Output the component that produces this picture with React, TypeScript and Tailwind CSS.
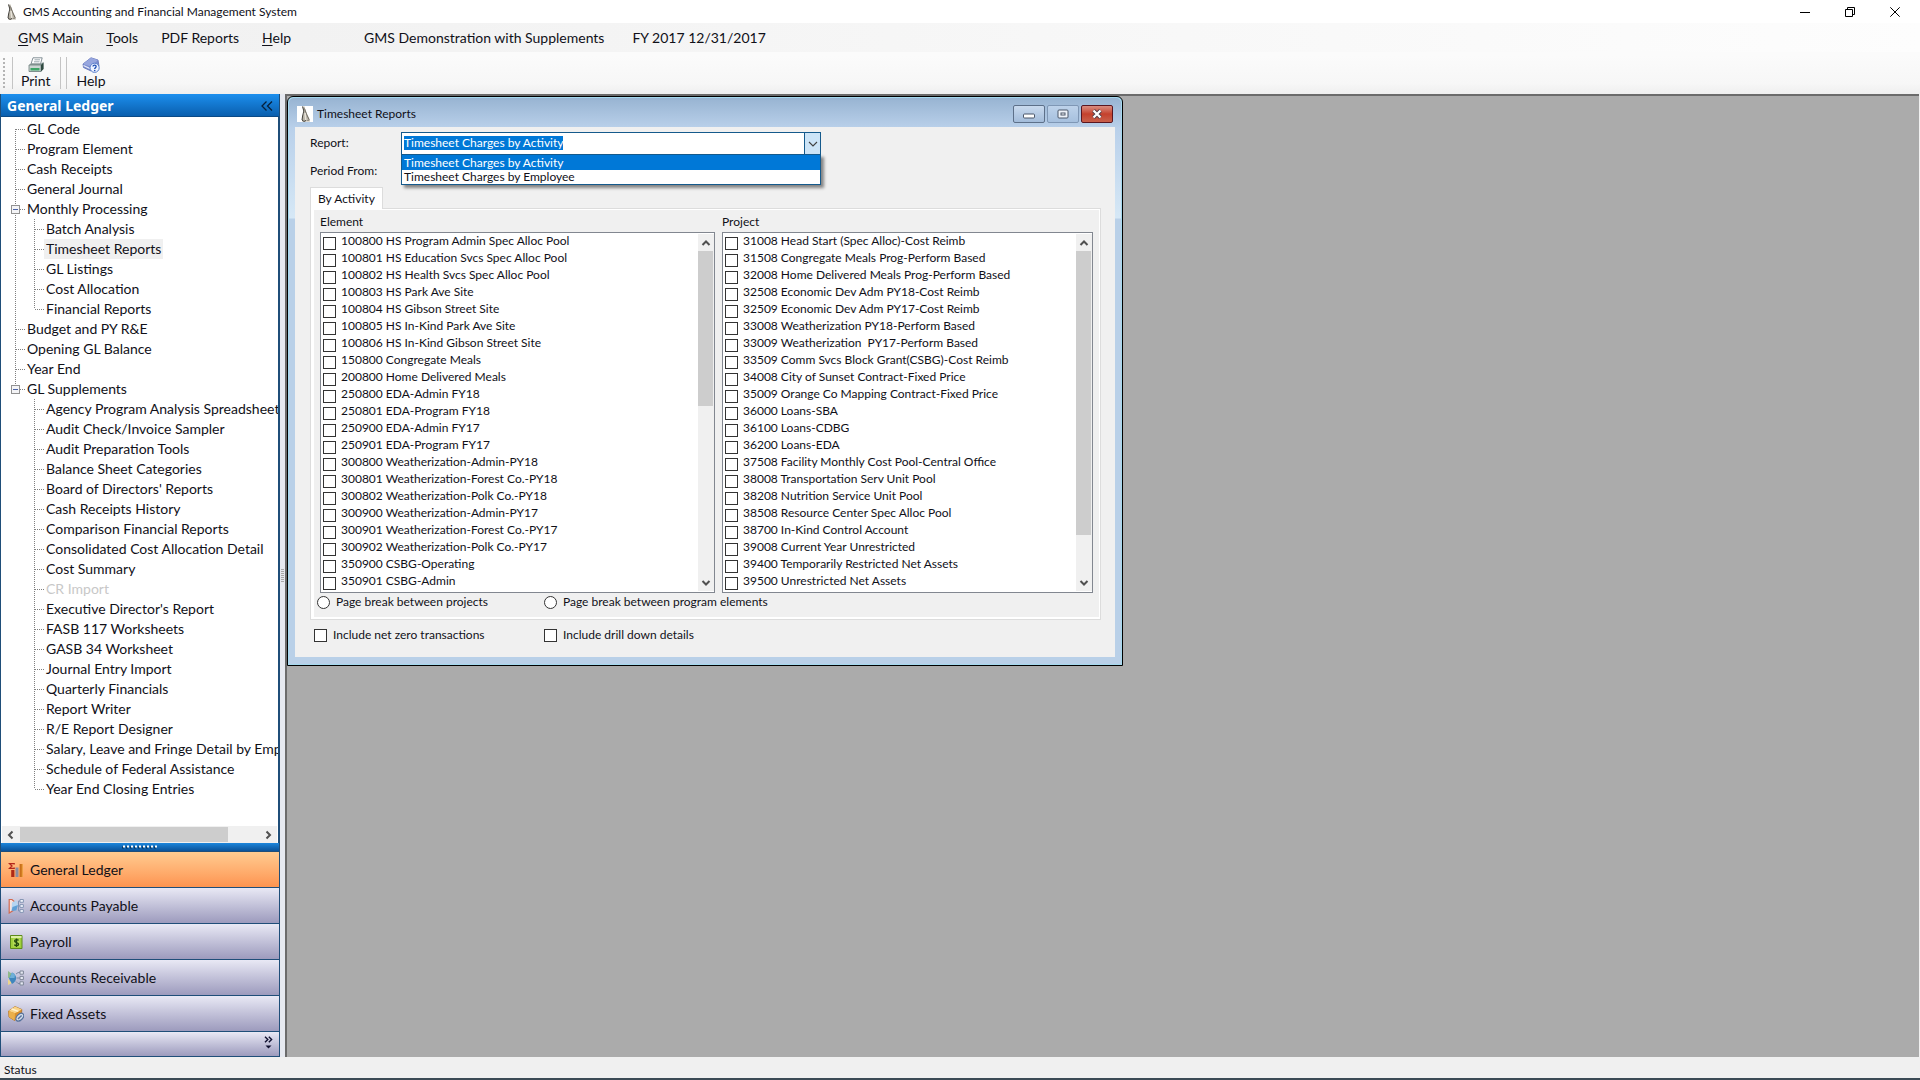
import React from "react";

const monthly = ["Batch Analysis", "Timesheet Reports", "GL Listings", "Cost Allocation", "Financial Reports"];
const supplements = [
  "Agency Program Analysis Spreadsheet",
  "Audit Check/Invoice Sampler",
  "Audit Preparation Tools",
  "Balance Sheet Categories",
  "Board of Directors' Reports",
  "Cash Receipts History",
  "Comparison Financial Reports",
  "Consolidated Cost Allocation Detail",
  "Cost Summary",
  "CR Import",
  "Executive Director's Report",
  "FASB 117 Worksheets",
  "GASB 34 Worksheet",
  "Journal Entry Import",
  "Quarterly Financials",
  "Report Writer",
  "R/E Report Designer",
  "Salary, Leave and Fringe Detail by Employee",
  "Schedule of Federal Assistance",
  "Year End Closing Entries",
];

type Node = { label: string; children?: string[] };
const tree: Node[] = [
  { label: "GL Code" },
  { label: "Program Element" },
  { label: "Cash Receipts" },
  { label: "General Journal" },
  { label: "Monthly Processing", children: monthly },
  { label: "Budget and PY R&E" },
  { label: "Opening GL Balance" },
  { label: "Year End" },
  { label: "GL Supplements", children: supplements },
];

const elements = [
  "100800 HS Program Admin Spec Alloc Pool",
  "100801 HS Education Svcs Spec Alloc Pool",
  "100802 HS Health Svcs Spec Alloc Pool",
  "100803 HS Park Ave Site",
  "100804 HS Gibson Street Site",
  "100805 HS In-Kind Park Ave Site",
  "100806 HS In-Kind Gibson Street Site",
  "150800 Congregate Meals",
  "200800 Home Delivered Meals",
  "250800 EDA-Admin FY18",
  "250801 EDA-Program FY18",
  "250900 EDA-Admin FY17",
  "250901 EDA-Program FY17",
  "300800 Weatherization-Admin-PY18",
  "300801 Weatherization-Forest Co.-PY18",
  "300802 Weatherization-Polk Co.-PY18",
  "300900 Weatherization-Admin-PY17",
  "300901 Weatherization-Forest Co.-PY17",
  "300902 Weatherization-Polk Co.-PY17",
  "350900 CSBG-Operating",
  "350901 CSBG-Admin",
];

const projects = [
  "31008 Head Start (Spec Alloc)-Cost Reimb",
  "31508 Congregate Meals Prog-Perform Based",
  "32008 Home Delivered Meals Prog-Perform Based",
  "32508 Economic Dev Adm PY18-Cost Reimb",
  "32509 Economic Dev Adm PY17-Cost Reimb",
  "33008 Weatherization PY18-Perform Based",
  "33009 Weatherization  PY17-Perform Based",
  "33509 Comm Svcs Block Grant(CSBG)-Cost Reimb",
  "34008 City of Sunset Contract-Fixed Price",
  "35009 Orange Co Mapping Contract-Fixed Price",
  "36000 Loans-SBA",
  "36100 Loans-CDBG",
  "36200 Loans-EDA",
  "37508 Facility Monthly Cost Pool-Central Office",
  "38008 Transportation Serv Unit Pool",
  "38208 Nutrition Service Unit Pool",
  "38508 Resource Center Spec Alloc Pool",
  "38700 In-Kind Control Account",
  "39008 Current Year Unrestricted",
  "39400 Temporarily Restricted Net Assets",
  "39500 Unrestricted Net Assets",
];

/* ---------- icons ---------- */

function AppIcon({ className }: { className: string }) {
  return (
    <svg viewBox="0 0 16 16" className={className} aria-hidden="true">
      <path d="M5.5 0.5 L7.5 0.5 L8.5 4 L10 8 L12.5 13 L13 15.5 L5 15.5 L5 11 L7 7 Z" fill="#b9b4a8" />
      <path d="M5.5 0.5 L6.8 5 L5.6 10 L5 14 L7 15.5 L9 14.5" fill="none" stroke="#45433e" strokeWidth="1" />
      <path d="M7.5 2.5 L9.5 8 L12 13.5 L10.5 15" fill="none" stroke="#6b665d" strokeWidth="0.9" />
      <path d="M8 7 L8.8 14" stroke="#e9e5dc" strokeWidth="1.4" />
    </svg>
  );
}

function PrinterIcon() {
  return (
    <svg viewBox="0 0 16 16" className="h-4 w-4" aria-hidden="true">
      <path d="M5 0.8 L14.2 0.8 L12.5 7 L3 7 Z" fill="#fff" stroke="#66757c" strokeWidth="0.8" />
      <path d="M6.5 2.8 H12 M6 4.8 H11.5" stroke="#7d8f97" strokeWidth="0.8" />
      <path d="M1 8 L3 6.5 H13 L15.5 5 V12 L13 14.5 H1 Z" fill="#8d9c9c" />
      <path d="M1 8 H13 V14.5 H1 Z" fill="#cbd5d2" stroke="#6c7f7c" strokeWidth="0.8" />
      <path d="M13 8 L15.5 5.5 V12 L13 14.5 Z" fill="#2f4a40" />
      <path d="M2.5 11 H11.5 V13.5 H2.5 Z" fill="#3fa568" />
    </svg>
  );
}

function HelpIcon() {
  return (
    <svg viewBox="0 0 18 16" className="h-4 w-[18px]" aria-hidden="true">
      <path d="M1 7 L9 0.8 L16 3 L17 9 L9 14 L1.5 10.5 Z" fill="#7d8fd0" stroke="#5b6cb4" strokeWidth="0.8" />
      <path d="M1 7 L9 0.8 L16 3 L9 9.5 Z" fill="#97a6de" />
      <path d="M1.5 8.5 L9 12 L15 7.5" fill="none" stroke="#e8ecfb" strokeWidth="1.2" />
      <circle cx="12.6" cy="10.8" r="4.6" fill="#eef3ff" stroke="#5c80cc" strokeWidth="1" />
      <path d="M11 9.6 C11 7.6 14.3 7.8 14.1 9.6 C14 10.7 12.7 10.7 12.7 12" fill="none" stroke="#1f4fb4" strokeWidth="1.3" />
      <circle cx="12.7" cy="13.6" r="0.8" fill="#1f4fb4" />
    </svg>
  );
}

function LedgerIcon() {
  return (
    <svg viewBox="0 0 16 16" className="h-4 w-4" aria-hidden="true">
      <path d="M6.2 2.6 V1.6 H1.5 L4 4 L1.5 6.4 H6.2 V5.4" fill="none" stroke="#b3261c" strokeWidth="1.3" />
      <path d="M3.2 8 H6.4 V15 H3.2 Z" fill="#b02a16" />
      <path d="M7.5 5.5 H10.5 V15 H7.5 Z" fill="#8b8da0" />
      <path d="M11.6 2 H14.8 V15 H11.6 Z" fill="#c9701a" />
      <path d="M13.8 2 H14.8 V15 H13.8 Z" fill="#f0a848" />
    </svg>
  );
}

function PayableIcon() {
  return (
    <svg viewBox="0 0 16 16" className="h-4 w-4" aria-hidden="true">
      <path d="M1.2 1.5 H4 L8.5 5.5 L9.5 8 L6 12 L1.2 15 Z" fill="#f6e3df" stroke="#d2694f" strokeWidth="1.2" />
      <path d="M4 4.5 L8 2.5 L10.4 7 L8 12.5 L3.5 12 Z" fill="#b5d5f2" />
      <path d="M4.5 9 L10 7 L8.4 12.5 L3.5 13 Z" fill="#5f9fd6" />
      <path d="M10.5 3 V13 M10.5 3 H12 M10.5 8 H12 M10.5 13 H12" stroke="#7f93b6" fill="none" />
      <path d="M12 1.5 H15.4 V4.3 H12 Z M12 6.6 H15.4 V9.4 H12 Z M12 11.6 H15.4 V14.4 H12 Z" fill="#eef2fa" stroke="#8696b4" strokeWidth="1" />
    </svg>
  );
}

function PayrollIcon() {
  return (
    <svg viewBox="0 0 16 16" className="h-4 w-4" aria-hidden="true">
      <path d="M2.5 1.5 H14 V14.5 H2.5 Z" fill="#9fd03c" stroke="#5c8a1c" />
      <path d="M3 2 H13.5 V4 H3 Z" fill="#dcefa4" />
      <path d="M5 4.5 H12 V12.5 H5 Z" fill="#b4dc58" />
      <path d="M10.6 6.4 C9.6 5.2 6.6 5.4 6.6 7 C6.6 9 10.6 8.1 10.6 10.2 C10.6 12 7.2 12 6.3 10.6 M8.5 4.4 V13" fill="none" stroke="#234b0e" strokeWidth="1.4" />
    </svg>
  );
}

function ReceivableIcon() {
  return (
    <svg viewBox="0 0 16 16" className="h-4 w-4" aria-hidden="true">
      <path d="M0 1 L4 4 L2 8 L0 8 Z" fill="#8fb98a" />
      <path d="M0 15 L0 9 L4 13 Z" fill="#ecd58c" />
      <path d="M4 2.5 C9.5 5 9.5 11 4 14 L1 8.5 Z" fill="#3f86bd" />
      <path d="M4 2.5 L7 4.5 L6.5 8 L1.5 8 Z" fill="#6fb0d8" />
      <path d="M8 4 L10 2.6 H12 M8.5 8 H12 M8 11.5 L10 13.5 H12" stroke="#7c8aa4" fill="none" />
      <path d="M12 1 H15.4 V4.2 H12 Z M12 6.4 H15.4 V9.6 H12 Z M12 11.8 H15.4 V15 H12 Z" fill="#e6e9f2" stroke="#7f8798" />
    </svg>
  );
}

function AssetsIcon() {
  return (
    <svg viewBox="0 0 16 16" className="h-4 w-4" aria-hidden="true">
      <path d="M0.6 5 L7 0.6 L13.8 3.5 L13.4 10 L6.5 14.4 L1 11 Z" fill="#d98f2c" stroke="#a9691a" strokeWidth="0.8" />
      <path d="M0.6 5 L7 0.6 L13.8 3.5 L7 7.2 Z" fill="#f9d489" />
      <path d="M0.6 5 L7 7.2 L6.5 14.4 L1 11 Z" fill="#eab04c" />
      <path d="M3.6 3 L10.3 5.4" stroke="#fff3d0" strokeWidth="1.4" />
      <ellipse cx="11.8" cy="11.2" rx="4.6" ry="2.9" transform="rotate(-45 11.8 11.2)" fill="#d3ddea" stroke="#55719b" strokeWidth="1.2" />
      <path d="M10 13 L13.6 9.4" stroke="#55719b" strokeWidth="1.4" />
    </svg>
  );
}

function Chevron({ dir }: { dir: "up" | "down" | "left" | "right" }) {
  const d = {
    up: "M1.5 7 L5 3.5 L8.5 7",
    down: "M1.5 3 L5 6.5 L8.5 3",
    left: "M6.5 1.5 L3 5 L6.5 8.5",
    right: "M3.5 1.5 L7 5 L3.5 8.5",
  }[dir];
  return (
    <svg viewBox="0 0 10 10" className="h-[10px] w-[10px]" aria-hidden="true">
      <path d={d} fill="none" stroke="#505050" strokeWidth="2" />
    </svg>
  );
}

/* ---------- navigation tree ---------- */

function RootGuide({ first, last, open }: { first: boolean; last: boolean; open: boolean }) {
  return (
    <svg viewBox="0 0 24 20" className="h-5 w-6 shrink-0" shapeRendering="crispEdges" aria-hidden="true">
      <path d={`M14.5 ${first ? 10 : 0} V${last ? 10 : 20}`} stroke="#808080" strokeDasharray="1 1" />
      <path d="M15 10.5 H24" stroke="#808080" strokeDasharray="1 1" />
      {open && (
        <>
          <rect x="10.5" y="6.5" width="8" height="8" fill="#f4f4f6" stroke="#919191" />
          <path d="M12 10.5 H17" stroke="#4b63a7" />
        </>
      )}
    </svg>
  );
}

function ChildGuide({ last, rail }: { last: boolean; rail: boolean }) {
  return (
    <svg viewBox="0 0 43 20" className="h-5 w-[43px] shrink-0" shapeRendering="crispEdges" aria-hidden="true">
      {rail && <path d="M14.5 0 V20" stroke="#808080" strokeDasharray="1 1" />}
      <path d={`M33.5 0 V${last ? 10 : 20}`} stroke="#808080" strokeDasharray="1 1" />
      <path d="M34 10.5 H43" stroke="#808080" strokeDasharray="1 1" />
    </svg>
  );
}

function TreeLabel({ label }: { label: string }) {
  if (label === "Timesheet Reports") {
    return <button className="h-5 bg-[#f0f0f0] px-[2px] whitespace-nowrap">{label}</button>;
  }
  if (label === "CR Import") {
    return <button disabled className="h-5 px-[2px] whitespace-nowrap text-[#c8c8c8]">{label}</button>;
  }
  return <button className="h-5 px-[2px] whitespace-nowrap">{label}</button>;
}

function Tree() {
  return (
    <ul className="flex-1 overflow-hidden pt-[2px] text-sm leading-5">
      {tree.map((n, i) => {
        const last = i === tree.length - 1;
        return (
          <li key={n.label}>
            <div className="flex">
              <RootGuide first={i === 0} last={last} open={!!n.children} />
              <TreeLabel label={n.label} />
            </div>
            {n.children && (
              <ul>
                {n.children.map((c, j) => (
                  <li key={c} className="flex">
                    <ChildGuide rail={!last} last={j === n.children!.length - 1} />
                    <TreeLabel label={c} />
                  </li>
                ))}
              </ul>
            )}
          </li>
        );
      })}
    </ul>
  );
}

const modules = [
  { label: "Accounts Payable", icon: <PayableIcon /> },
  { label: "Payroll", icon: <PayrollIcon /> },
  { label: "Accounts Receivable", icon: <ReceivableIcon /> },
  { label: "Fixed Assets", icon: <AssetsIcon /> },
];

function Sidebar() {
  return (
    <aside className="flex w-[280px] shrink-0 flex-col border-x border-b border-[#1f4e79] bg-white">
      <div className="flex h-[23px] items-center justify-between border-b border-[#0b4a86] bg-linear-to-b from-[#1c8fee] to-[#0a5fae] pt-px pr-[6px] pl-[6px]">
        <h2 className="font-['Noto_Sans'] text-sm leading-5 font-bold text-white">General Ledger</h2>
        <button aria-label="Collapse panel">
          <svg viewBox="0 0 12 10" className="h-[10px] w-3" aria-hidden="true">
            <path d="M5.5 0.5 L1 5 L5.5 9.5 M11 0.5 L6.5 5 L11 9.5" fill="none" stroke="#06203c" strokeWidth="1.3" />
          </svg>
        </button>
      </div>
      <div className="flex min-h-0 flex-1 flex-col border-r border-[#1f4e79]">
        <Tree />
        <div className="mx-px flex h-[17px] items-center bg-[#f0f0f0]">
          <button aria-label="Scroll left" className="flex h-full w-[18px] items-center justify-center">
            <Chevron dir="left" />
          </button>
          <div className="flex h-[15px] flex-1">
            <div className="h-full w-[87%] bg-[#cdcdcd]" />
          </div>
          <button aria-label="Scroll right" className="flex h-full w-[18px] items-center justify-center">
            <Chevron dir="right" />
          </button>
        </div>
      </div>
      <div className="flex h-2 items-center justify-center bg-linear-to-b from-[#1c86dc] to-[#0a5298]">
        <svg viewBox="0 0 36 4" className="h-1 w-9" aria-hidden="true">
          <path d="M0 2.5 H36" stroke="#06365f" strokeWidth="2" strokeDasharray="2 2" />
          <path d="M1 1.5 H36" stroke="#ffffff" strokeWidth="2" strokeDasharray="2 2" />
        </svg>
      </div>
      <nav className="text-sm">
        <button className="flex h-9 w-full items-center gap-[6px] border-t border-[#1f4e79] bg-linear-to-b from-[#ffcb90] to-[#fd9450] pl-[7px]">
          <LedgerIcon />
          General Ledger
        </button>
        {modules.map((m) => (
          <button
            key={m.label}
            className="flex h-9 w-full items-center gap-[6px] border-t border-[#1f4e79] bg-linear-to-b from-[#e9e9f5] to-[#9d9bbd] pl-[7px]"
          >
            {m.icon}
            {m.label}
          </button>
        ))}
        <div className="flex h-[25px] items-start justify-end border-t border-[#1f4e79] bg-linear-to-b from-[#e9e9f5] to-[#9d9bbd] pt-1 pr-[6px]">
          <button aria-label="Configure buttons">
            <svg viewBox="0 0 9 13" className="h-[13px] w-[9px]" aria-hidden="true">
              <path d="M1 0.8 L3.8 3.5 L1 6.2 M4.8 0.8 L7.6 3.5 L4.8 6.2" fill="none" stroke="#101030" strokeWidth="1.4" />
              <path d="M1.5 9.5 H7.5 L4.5 12.5 Z" fill="#101030" />
            </svg>
          </button>
        </div>
      </nav>
    </aside>
  );
}

/* ---------- timesheet window ---------- */

function CheckList({ title, items, wide }: { title: string; items: string[]; wide: boolean }) {
  return (
    <fieldset className={wide ? "min-w-0 flex-[395]" : "min-w-0 flex-[371]"}>
      <legend className="block h-[17px] leading-[14px]">{title}</legend>
      <div className="flex border border-[#828790] bg-white">
        <ul className="min-w-0 flex-1 py-px pl-[2px]">
          {items.map((t) => (
            <li key={t} className="h-[17px]">
              <label className="flex items-start gap-[5px] leading-[14px] whitespace-pre">
                <input type="checkbox" className="mt-[3px] h-[13px] w-[13px] shrink-0 appearance-none border border-[#333] bg-white checked:bg-[#333]" />
                {t}
              </label>
            </li>
          ))}
        </ul>
        <div className="m-px mr-0 flex w-4 flex-col bg-[#f0f0f0]">
          <button aria-label="Scroll up" className="flex h-[17px] items-center justify-center">
            <Chevron dir="up" />
          </button>
          <div className="flex-1">
            <div className={wide ? "h-[48%] w-[15px] bg-[#cdcdcd]" : "h-[88%] w-[15px] bg-[#cdcdcd]"} />
          </div>
          <button aria-label="Scroll down" className="flex h-[17px] items-center justify-center">
            <Chevron dir="down" />
          </button>
        </div>
      </div>
    </fieldset>
  );
}

function ReportPicker() {
  return (
    <div className="relative w-[420px]">
      <div className="flex h-[23px] border border-[#155a8c] bg-white">
        <div className="flex-1 px-[2px] pt-[2px]">
          <select
            id="report"
            className="field-sizing-content h-[14px] appearance-none bg-[#0078d7] leading-[14px] text-white"
            defaultValue="activity"
          >
            <option value="activity">Timesheet Charges by Activity</option>
          </select>
        </div>
        <button aria-label="Open report list" className="flex w-4 items-center justify-center border-l border-[#155a8c] bg-[#cce4f7]">
          <svg viewBox="0 0 10 6" className="h-[6px] w-[10px]" aria-hidden="true">
            <path d="M1 1 L5 5 L9 1" fill="none" stroke="#404040" strokeWidth="1.1" />
          </svg>
        </button>
      </div>
      <ul role="listbox" aria-label="Report" className="absolute inset-x-0 top-[22px] border border-[#155a8c] bg-white leading-[14px] shadow-[3px_3px_3px_rgba(0,0,0,0.45)]">
        <li role="option" aria-selected="true" className="bg-[#0078d7] px-[2px] pt-px text-white">
          Timesheet Charges by Activity
        </li>
        <li role="option" aria-selected="false" className="px-[2px]">
          Timesheet Charges by Employee
        </li>
      </ul>
    </div>
  );
}

function Option({ type, label }: { type: "radio" | "checkbox"; label: string }) {
  return (
    <label className="flex items-center">
      {type === "radio" ? (
        <input type="radio" name="page-break" className="mr-[6px] h-[13px] w-[13px] appearance-none rounded-full border border-[#333] bg-white" />
      ) : (
        <input type="checkbox" className="mr-[6px] h-[13px] w-[13px] appearance-none border border-[#333] bg-white" />
      )}
      {label}
    </label>
  );
}

function TimesheetWindow() {
  return (
    <section className="w-[836px] max-w-full rounded-t-md border border-black bg-[#a5d9ee] p-px text-xs">
      <div className="rounded-t-[5px] bg-[linear-gradient(to_bottom,#98b4d2,#b9d0ea_30px,#d6e8f6_120px,#b9d0e8_121px)] px-[6px] pb-[7px]">
        <header className="flex h-[29px] items-center pt-[3px] pl-[2px]">
          <AppIcon className="h-4 w-4 bg-white" />
          <h1 className="flex-1 pl-1 text-xs">Timesheet Reports</h1>
          <div className="mr-[2px] flex gap-[2px]">
            <button aria-label="Minimize" className="flex h-[18px] w-8 items-center justify-center rounded-xs border border-[#5d7089] bg-linear-to-b from-[#c9daee] to-[#a3bcda]">
              <svg viewBox="0 0 12 6" className="mt-[3px] h-[6px] w-3" aria-hidden="true">
                <rect x="0.5" y="1" width="11" height="4" rx="1" fill="#fff" stroke="#4a5668" />
              </svg>
            </button>
            <button aria-label="Restore" className="flex h-[18px] w-8 items-center justify-center rounded-xs border border-[#7f97b5] bg-linear-to-b from-[#bdd2ea] to-[#a6c0de]">
              <svg viewBox="0 0 12 10" className="h-[10px] w-3" aria-hidden="true">
                <rect x="1" y="1" width="10" height="8" rx="1" fill="#eef3f9" stroke="#4a5668" />
                <rect x="4" y="4" width="4" height="2" fill="#fff" stroke="#4a5668" />
              </svg>
            </button>
            <button aria-label="Close" className="flex h-[18px] w-8 items-center justify-center rounded-xs border border-[#5a1620] bg-linear-to-b from-[#d98c80] via-[#c4402c] via-50% to-[#c8604c]">
              <svg viewBox="0 0 12 10" className="h-[10px] w-3" aria-hidden="true">
                <path d="M2.5 1.5 L9.5 8.5 M9.5 1.5 L2.5 8.5" stroke="#53404a" strokeWidth="4" />
                <path d="M2.5 1.5 L9.5 8.5 M9.5 1.5 L2.5 8.5" stroke="#fff" strokeWidth="2.2" />
              </svg>
            </button>
          </div>
        </header>
        <div className="bg-[#f0f0f0] pt-[5px] pr-[14px] pb-[13px] pl-[15px]">
          <div className="flex">
            <label htmlFor="report" className="w-[91px] pt-[2px] leading-[18px]">
              Report:
            </label>
            <ReportPicker />
          </div>
          <p className="mt-[7px] leading-[18px]">Period From:</p>
          <div role="tablist" className="mt-[7px] flex">
            <button role="tab" aria-selected="true" className="-mb-px h-[22px] border border-b-0 border-[#dcdcdc] bg-white px-[7px]">
              By Activity
            </button>
          </div>
          <div role="tabpanel" className="border border-[#dcdcdc] bg-white p-px pl-[3px] pb-[2px]">
            <div className="bg-[#f0f0f0] px-[6px] pt-[5px] pb-[6px]">
              <div className="flex gap-[7px]">
                <CheckList title="Element" items={elements} wide />
                <CheckList title="Project" items={projects} wide={false} />
              </div>
              <div className="-ml-[3px] grid h-[18px] grid-cols-[227px_1fr] items-center">
                <Option type="radio" label="Page break between projects" />
                <Option type="radio" label="Page break between program elements" />
              </div>
            </div>
          </div>
          <div className="mt-[6px] grid h-[18px] grid-cols-[230px_1fr] items-center pl-1">
            <Option type="checkbox" label="Include net zero transactions" />
            <Option type="checkbox" label="Include drill down details" />
          </div>
        </div>
      </div>
    </section>
  );
}

/* ---------- shell ---------- */

export default function App() {
  return (
    <div className="flex min-h-screen flex-col bg-[#f0f0f0] font-[Lato,sans-serif] text-[#101018]">
      <header className="flex h-[23px] items-center bg-white">
        <AppIcon className="ml-[3px] h-4 w-4" />
        <span className="flex-1 pl-1 text-xs">GMS Accounting and Financial Management System</span>
        <div className="flex gap-[35px] pr-[20px]">
          <button aria-label="Minimize">
            <svg viewBox="0 0 10 10" className="h-[10px] w-[10px]" aria-hidden="true">
              <path d="M0 5.5 H10" stroke="#000" />
            </svg>
          </button>
          <button aria-label="Restore">
            <svg viewBox="0 0 10 10" className="h-[10px] w-[10px]" aria-hidden="true">
              <path d="M0.5 2.5 H7.5 V9.5 H0.5 Z M2.5 2.5 V0.5 H9.5 V7.5 H7.5" fill="none" stroke="#000" />
            </svg>
          </button>
          <button aria-label="Close">
            <svg viewBox="0 0 10 10" className="h-[10px] w-[10px]" aria-hidden="true">
              <path d="M0.3 0.3 L9.7 9.7 M9.7 0.3 L0.3 9.7" stroke="#000" />
            </svg>
          </button>
        </div>
      </header>

      <nav className="flex h-[29px] items-center bg-linear-to-r from-[#f0f0f0] to-[#fdfdfd] pl-[18px] text-sm">
        <button className="mr-[23px]"><u className="underline-offset-2">G</u>MS Main</button>
        <button className="mr-[23px]"><u className="underline-offset-2">T</u>ools</button>
        <button className="mr-[23px]">PDF Reports</button>
        <button className="mr-[73px]"><u className="underline-offset-2">H</u>elp</button>
        <span className="mr-[28px]">GMS Demonstration with Supplements</span>
        <span>FY 2017 12/31/2017</span>
      </nav>

      <div className="flex h-[42px] items-center bg-linear-to-b from-[#fbfbfb] from-10% via-[#f7f7f7] via-75% to-[#efefef] text-sm">
        <div className="ml-[3px] h-[30px] border-l-2 border-dotted border-[#b4b4b4]" />
        <div className="ml-[7px] h-8 border-l border-[#c4c4c4]" />
        <button className="flex h-8 flex-col items-center justify-between px-2 leading-4">
          <PrinterIcon />
          Print
        </button>
        <div className="ml-[2px] h-8 border-l border-[#c4c4c4]" />
        <div className="ml-[5px] h-8 border-l border-[#c4c4c4]" />
        <button className="flex h-8 flex-col items-center justify-between px-[9px] leading-4">
          <HelpIcon />
          Help
        </button>
      </div>

      <div className="flex flex-1">
        <Sidebar />
        <div className="flex w-[5px] shrink-0 items-center justify-center bg-[#e6e9f0]">
          <svg viewBox="0 0 3 14" className="h-[14px] w-[3px]" aria-hidden="true">
            <path d="M0 0.5 H3 M0 2.5 H3 M0 4.5 H3 M0 6.5 H3 M0 8.5 H3 M0 10.5 H3 M0 12.5 H3" stroke="#a8a8a8" />
          </svg>
        </div>
        <main className="mr-px min-w-0 flex-1 border-t-2 border-l-2 border-[#6b6b6b] bg-[#ababab]">
          <TimesheetWindow />
        </main>
      </div>

      <footer className="mt-px flex h-[22px] items-center border-b-2 border-[#3b4a55] pt-[3px] pl-1 text-xs">Status</footer>
    </div>
  );
}
